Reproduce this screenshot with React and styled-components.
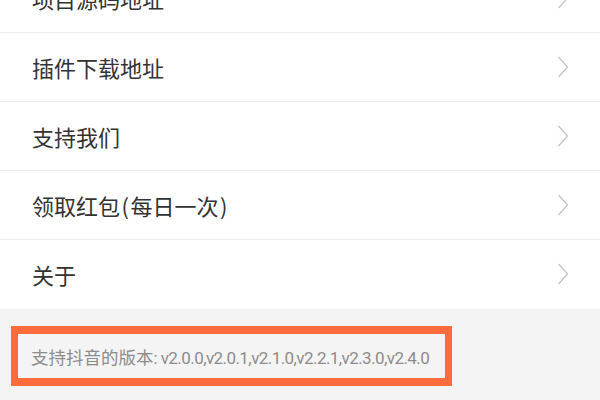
import React from "react";
import styled, { createGlobalStyle } from "styled-components";

const Global = createGlobalStyle`
  html, body { margin: 0; padding: 0; background: #f4f4f4; }
  body { width: 600px; height: 400px; overflow: hidden; font-family: Roboto, "Noto Sans CJK SC", sans-serif; }
`;

const Page = styled.div`
  width: 600px;
  height: 400px;
  overflow: hidden;
  background: #f4f4f4;
  display: flex;
  flex-direction: column;
`;

const List = styled.div`
  margin-top: -36px;
  background: #fff;
  display: flex;
  flex-direction: column;
`;

const Row = styled.div`
  height: 68px;
  display: flex;
  align-items: center;
  justify-content: space-between;
  padding: 0 31px 0 32px;
  border-bottom: 1px solid ${(p) => (p.$last ? "transparent" : "#ececec")};
`;

const Label = styled.span`
  font-family: "Noto Sans CJK SC", Roboto, sans-serif;
  font-size: 22px;
  color: #333;
  line-height: 1;
`;

const Paren = styled.span`
  padding: 0 1.5px;
`;

const Footer = styled.div`
  flex: 1;
  padding: 17px 0 0 11px;
`;

const Highlight = styled.div`
  box-sizing: border-box;
  width: 441px;
  height: 60px;
  border: 8px solid #fb6b3c;
  border-left-width: 7px;
  border-right-width: 7px;
  display: flex;
  align-items: center;
  padding-left: 13px;
`;

const Note = styled.span`
  font-family: Roboto, "Noto Sans CJK SC", sans-serif;
  font-size: 17.5px;
  color: #8c8c8c;
  white-space: nowrap;
`;

const Versions = styled.span`
  font-size: 17px;
  letter-spacing: -0.57px;
`;

const Chevron = () => (
  <svg width="12" height="22" viewBox="0 0 12 22" fill="none">
    <path d="M1.5 1 L10.5 11 L1.5 21" stroke="#c4c4c4" strokeWidth="1.3" />
  </svg>
);

const items = [
  { key: "src", text: "项目源码地址" },
  { key: "dl", text: "插件下载地址" },
  { key: "support", text: "支持我们" },
  {
    key: "redpack",
    text: (
      <>
        领取红包<Paren>(</Paren>每日一次<Paren>)</Paren>
      </>
    ),
  },
  { key: "about", text: "关于" },
];

export default function App() {
  return (
    <Page>
      <Global />
      <List>
        {items.map((it, i) => (
          <Row key={it.key} $last={i === items.length - 1}>
            <Label>{it.text}</Label>
            <Chevron />
          </Row>
        ))}
      </List>
      <Footer>
        <Highlight>
          <Note>
            支持抖音的版本<Versions>: v2.0.0,v2.0.1,v2.1.0,v2.2.1,v2.3.0,v2.4.0</Versions>
          </Note>
        </Highlight>
      </Footer>
    </Page>
  );
}
